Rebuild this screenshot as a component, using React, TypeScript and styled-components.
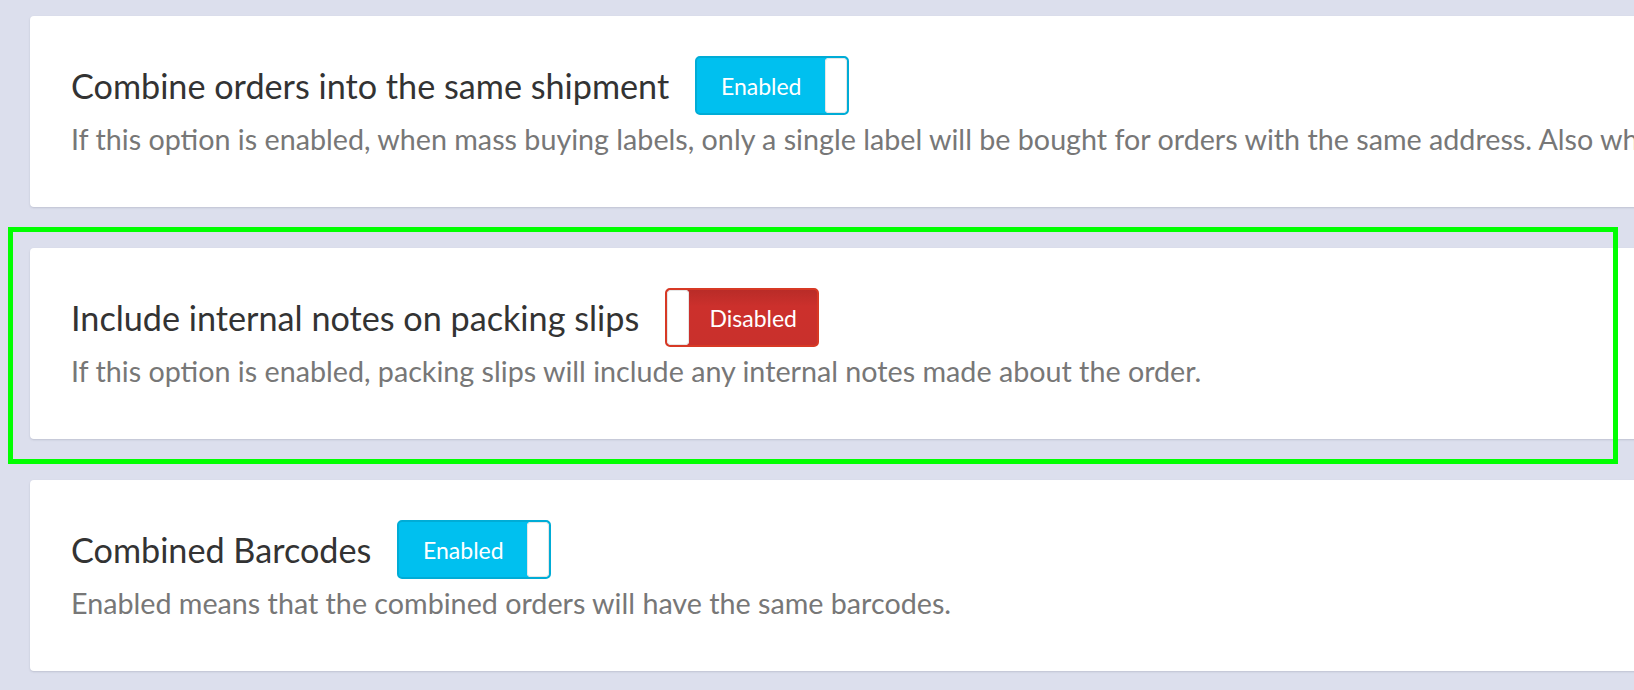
import React from "react";
import styled, { createGlobalStyle } from "styled-components";

const GlobalStyle = createGlobalStyle`
  html, body {
    margin: 0;
    padding: 0;
    background: #dcdfed;
    overflow: hidden;
  }
  * { box-sizing: border-box; }
`;

const Page = styled.div`
  position: relative;
  width: 1634px;
  height: 690px;
  overflow: hidden;
  padding: 16px 0 0 30px;
  display: flex;
  flex-direction: column;
  gap: 41px;
  font-family: Lato, "Open Sans", sans-serif;
`;

const Card = styled.section`
  width: 1700px;
  height: 191px;
  background: #ffffff;
  border-radius: 4px;
  box-shadow: 0 1px 2px rgba(60, 64, 90, 0.18);
  padding: 40px 0 0 41px;
  display: flex;
  flex-direction: column;
`;

const TitleRow = styled.div`
  display: flex;
  align-items: center;
  gap: 26px;
  height: 59px;
`;

const Title = styled.h2`
  margin: 0;
  font-size: 34.2px;
  font-weight: 400;
  color: #333333;
  white-space: nowrap;
`;

const Description = styled.p`
  margin: 6px 0 0;
  font-size: 28.7px;
  line-height: 36px;
  color: #777777;
  white-space: nowrap;
`;

const Toggle = styled.div<{ $on: boolean }>`
  display: flex;
  flex-direction: ${(p) => (p.$on ? "row" : "row-reverse")};
  width: 154px;
  height: 59px;
  border-radius: 5px;
  border: 2px solid ${(p) => (p.$on ? "#00acd6" : "#d73925")};
  background: ${(p) =>
    p.$on ? "#00c0ef" : "linear-gradient(#b92c28, #cc302c 30%, #c9302c)"};
  overflow: hidden;
`;

const ToggleLabel = styled.span`
  flex: 1;
  display: flex;
  align-items: center;
  justify-content: center;
  color: #ffffff;
  font-size: 23px;
`;

const Knob = styled.span`
  width: 22px;
  background: #ffffff;
  border-radius: 4px;
  box-shadow: inset 0 0 0 1px #e6e6e6;
`;

const Highlight = styled.div`
  position: absolute;
  left: 8px;
  top: 227px;
  width: 1610px;
  height: 237px;
  border: 5px solid #00ff00;
  pointer-events: none;
`;

type Setting = { title: string; desc: string; on: boolean };

const settings: Setting[] = [
  {
    title: "Combine orders into the same shipment",
    desc:
      "If this option is enabled, when mass buying labels, only a single label will be bought for orders with the same address. Also wh",
    on: true,
  },
  {
    title: "Include internal notes on packing slips",
    desc: "If this option is enabled, packing slips will include any internal notes made about the order.",
    on: false,
  },
  {
    title: "Combined Barcodes",
    desc: "Enabled means that the combined orders will have the same barcodes.",
    on: true,
  },
];

export default function App() {
  return (
    <>
      <GlobalStyle />
      <Page>
        {settings.map((s) => (
          <Card key={s.title}>
            <TitleRow>
              <Title>{s.title}</Title>
              <Toggle $on={s.on}>
                <ToggleLabel>{s.on ? "Enabled" : "Disabled"}</ToggleLabel>
                <Knob />
              </Toggle>
            </TitleRow>
            <Description>{s.desc}</Description>
          </Card>
        ))}
        <Highlight />
      </Page>
    </>
  );
}
